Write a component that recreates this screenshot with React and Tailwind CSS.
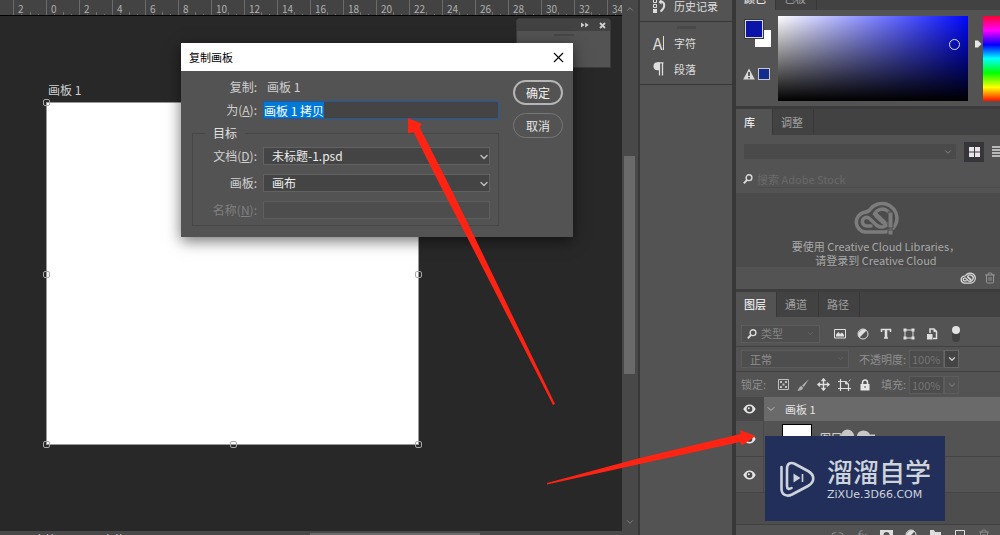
import React from 'react';
import { X, ChevronDown, ChevronUp, Move, Trash2, Link2 } from 'lucide-react';

const RULER_MARKS = ['2', '0', '2', '4', '6', '8', '10', '12', '14', '16', '18', '20', '22', '24', '26', '28', '30', '32', '34'];

const HANDLES = [
    'left-[-4px] top-[-4px]',
    'left-[-4px] top-1/2 -mt-[3px]',
    'right-[-4px] top-1/2 -mt-[3px]',
    'left-[-4px] bottom-[-4px]',
    'left-1/2 -ml-[3px] bottom-[-4px]',
    'right-[-4px] bottom-[-4px]',
];

const EyeIcon = () => (
    <svg width="13" height="10" viewBox="0 0 13 10">
        <path d="M0.3 5C2 1.8 4 .5 6.500 .5S11 1.800 12.700 5C11 8.200 9 9.500 6.500 9.500S2 8.200 .3 5Z" fill="#e6e6e6" />
        <circle cx="6.500" cy="5" r="2.900" fill="#484848" />
        <circle cx="5.800" cy="4.200" r="1" fill="#e6e6e6" />
    </svg>
);

const SearchIcon = () => (
    <svg width="10" height="10" viewBox="0 0 10 10" fill="none" stroke="#dcdcdc">
        <circle cx="6" cy="3.700" r="2.900" strokeWidth="1.400" />
        <path d="M4 6 .8 9.300" strokeWidth="1.800" />
    </svg>
);

const CloudIcon = ({ width, height, color }) => (
    <svg width={width} height={height} viewBox="0 0 46 33" fill="none" stroke={color} strokeLinecap="round">
        <path d="M12 31A10 10 0 0 1 10.500 11.500C14 11 15.500 11 17 8.500A15 15 0 0 1 44 16.500C44 25 38 31 31 31Z" strokeWidth="3.600" />
        <path d="M18 25H13.500A4.300 4.300 0 1 1 16.500 17.500L24 24.500C28 27.500 33 25.500 35.500 22.500" strokeWidth="3.600" />
        <path d="M21.500 13A8.600 8.600 0 0 1 37 20.500" strokeWidth="3.600" />
        <path d="M23.500 14.500 31 21.500" strokeWidth="5" />
    </svg>
);

const AdjustIcon = () => (
    <svg width="12" height="12" viewBox="0 0 12 12">
        <circle cx="6" cy="6" r="5" fill="none" stroke="#e0e0e0" />
        <path d="M9.500 2.500A5 5 0 0 0 2.500 9.500Z" fill="#e0e0e0" />
    </svg>
);

const Tab = ({ active, className, children }) => (
    <button
        type="button"
        role="tab"
        aria-selected={!!active}
        className={`border-r border-[#383838] px-2 text-left text-[11px] ${active ? 'bg-[#535353] font-medium text-[#e8e8e8]' : 'text-[#a3a3a3]'} ${className}`}
    >
        {children}
    </button>
);

const Ruler = () => (
    <div className="flex h-4 shrink-0 overflow-hidden border-b border-black bg-[#434343] pl-[13px]">
        {RULER_MARKS.map((mark, i) => (
            <div key={i} className="relative w-[33px] shrink-0 border-l border-[#6a6a6a] pl-1 pt-[3px] text-[10px] leading-3 text-[#b0b0b0]">
                {mark}
                <div className="absolute bottom-0 left-0 flex h-[3px] w-full justify-evenly">
                    <i className="h-px w-px self-end bg-[#707070]" />
                    <i className="h-[3px] w-px self-end bg-[#707070]" />
                    <i className="h-px w-px self-end bg-[#707070]" />
                </div>
            </div>
        ))}
    </div>
);

const Artboard = () => (
    <div className="absolute left-[46px] top-[86px]">
        <div className="absolute -top-5 left-[2px] whitespace-nowrap text-xs leading-4 text-[#cfcfcf]">画板 1</div>
        <div className="relative h-[343px] w-[373px] border border-[#9a9a9a] bg-white">
            {HANDLES.map((place) => (
                <span key={place} className={`absolute h-[7px] w-[7px] rounded-[2px] border border-[#a8a8a8] ${place}`} />
            ))}
        </div>
    </div>
);

const FloatingPanel = () => (
    <div className="absolute right-[11px] top-[2px] h-[50px] w-[95px] rounded-t border border-[#3a3a3a] bg-[#535353]">
        <div className="flex h-3 items-center justify-end gap-[10px] rounded-t bg-[#424242] pr-1">
            <svg width="8" height="6" viewBox="0 0 8 6" fill="#cfcfcf">
                <path d="M0 .5 3.500 3 0 5.500ZM4.200 .5 7.700 3 4.200 5.500Z" />
            </svg>
            <svg width="7" height="7" viewBox="0 0 7 7" stroke="#cfcfcf" strokeWidth="1.800">
                <path d="M1 1 6 6M6 1 1 6" />
            </svg>
        </div>
        <div className="mx-auto mt-[3px] h-[2px] w-5 bg-[#474747]" />
    </div>
);

const SelectField = ({ id, label, accessKey, value }) => (
    <div className="flex h-[18px] items-center">
        <label htmlFor={id} className="w-16 text-right text-[#d0d0d0]">
            {label}{accessKey && <>(<u>{accessKey}</u>)</>}:
        </label>
        <div className="relative ml-[6px] flex-1">
            <select id={id} className="block h-[18px] w-full appearance-none border border-[#626262] bg-[#444] pl-2 leading-4 text-[#ececec] outline-none">
                <option>{value}</option>
            </select>
            <ChevronDown size={12} strokeWidth={3} className="pointer-events-none absolute right-0 top-1 text-[#b8b8b8]" />
        </div>
    </div>
);

const DuplicateDialog = () => (
    <div role="dialog" aria-label="复制画板" className="absolute left-[181px] top-[43px] z-10 w-[392px] bg-[#535353] text-xs shadow-[0_4px_14px_rgba(0,0,0,0.55)]">
        <div className="flex h-7 items-center justify-between bg-white pl-2 pr-[6px] text-[11px] text-black">
            <span>复制画板</span>
            <button type="button" aria-label="关闭"><X size={17} strokeWidth={1.5} /></button>
        </div>
        <div className="flex pb-[11px] pl-[11px] pr-[10px] pt-[6px]">
            <div className="w-[307px]">
                <div className="flex h-5 items-center text-[#d0d0d0]">
                    <span className="w-[65px] text-right">复制:</span>
                    <span className="ml-[10px]">画板 1</span>
                </div>
                <div className="mt-1 flex h-[18px] items-center">
                    <label htmlFor="copy-name" className="w-[65px] text-right text-[#d0d0d0]">为(<u>A</u>):</label>
                    <input
                        id="copy-name"
                        autoFocus
                        onFocus={(e) => e.target.select()}
                        defaultValue="画板 1 拷贝"
                        className="ml-[6px] h-[18px] min-w-0 flex-1 border border-[#1f5aa5] bg-[#444] text-white outline-none selection:bg-[#0078d7] selection:text-white"
                    />
                </div>
                <fieldset className="mt-[6px] border border-[#464646] pb-[6px] pr-2">
                    <legend className="ml-3 px-2 leading-4 text-[#e0e0e0]">目标</legend>
                    <div className="flex flex-col gap-[9px] pt-[6px]">
                        <SelectField id="doc" label="文档" accessKey="D" value="未标题-1.psd" />
                        <SelectField id="board" label="画板" value="画布" />
                        <div className="flex h-[18px] items-center">
                            <label htmlFor="new-name" className="w-16 text-right text-[#808080]">名称(<u>N</u>):</label>
                            <input id="new-name" disabled className="ml-[6px] h-[18px] min-w-0 flex-1 border border-[#5e5e5e] bg-[#4d4d4d]" />
                        </div>
                    </div>
                </fieldset>
            </div>
            <div className="ml-auto flex w-[50px] flex-col gap-2 pt-[3px]">
                <button type="button" className="h-[25px] rounded-full border-2 border-[#b5b5b5] text-[#f0f0f0]">确定</button>
                <button type="button" className="h-[25px] rounded-full border border-[#777] text-[#e6e6e6]">取消</button>
            </div>
        </div>
    </div>
);

const Workspace = () => (
    <main className="flex min-w-0 flex-1 flex-col">
        <div className="flex min-h-0 flex-1">
            <div className="flex min-w-0 flex-1 flex-col">
                <Ruler />
                <div className="relative flex-1 bg-[#282828]">
                    <Artboard />
                    <FloatingPanel />
                </div>
            </div>
            <div className="flex w-4 flex-col items-center bg-[#484848] py-1">
                <ChevronUp size={10} className="shrink-0 text-[#8a8a8a]" />
                <div className="flex w-full flex-1 flex-col">
                    <div className="grow-[142]" />
                    <div className="ml-[2px] w-[11px] grow-[218] bg-[#6a6a6a]" />
                    <div className="grow-[143]" />
                </div>
                <ChevronDown size={10} className="shrink-0 text-[#8a8a8a]" />
            </div>
        </div>
        <div className="flex h-1 items-start overflow-hidden bg-[#484848] pl-[34px] text-[11px] leading-4 text-[#d0d0d0]">
            <span>文档:3.00M/0 字节</span>
            <div className="ml-auto mr-[158px] mt-[2px] h-1 w-[170px] bg-[#6a6a6a]" />
        </div>
    </main>
);

const DockItem = ({ icon, children }) => (
    <button type="button" className="flex h-[26px] w-full items-center gap-2 pl-[11px] text-[11px] text-[#dedede]">
        <span className="flex w-[15px] justify-center">{icon}</span>
        {children}
    </button>
);

const Dock = () => (
    <nav className="flex w-24 shrink-0 flex-col border-x-2 border-[#383838] bg-[#535353]">
        <div className="flex h-[22px] items-end overflow-hidden border-b border-[#383838] pb-[2px]">
            <DockItem
                icon={
                    <svg width="14" height="14" viewBox="0 0 14 14" fill="none" stroke="#dedede">
                        <path d="M1.500 .5h3v3h-3zM1.500 5.500h3v3h-3z" />
                        <path d="M1 10h4v4H1z" fill="#dedede" stroke="none" />
                        <path d="M8 2.500C13 2 14 8 8.500 12.500" strokeWidth="2" />
                        <path d="M6.500 3 9.500 .2V5.800Z" fill="#dedede" stroke="none" />
                    </svg>
                }
            >
                历史记录
            </DockItem>
        </div>
        <div className="border-b border-[#383838] pb-[2px]">
            <div className="mx-auto mb-px mt-1 h-[3px] w-[19px] bg-[#494949]" />
            <DockItem
                icon={
                    <span className="flex items-center gap-px text-base leading-4">
                        A<i className="h-[14px] w-px bg-[#dedede]" />
                    </span>
                }
            >
                字符
            </DockItem>
            <DockItem
                icon={
                    <svg width="11" height="14" viewBox="0 0 11 14">
                        <path d="M10.500 .8H4.500M6.500 .8V13.500M9.500 .8V13.500" fill="none" stroke="#dedede" strokeWidth="1.300" />
                        <path d="M6.500 .2H4.500a3.900 3.900 0 0 0 0 8H6.500Z" fill="#dedede" />
                    </svg>
                }
            >
                段落
            </DockItem>
        </div>
    </nav>
);

const ColorPanel = () => (
    <section className="border-b-3 border-[#3c3c3c]">
        <div role="tablist" className="flex h-[10px] items-end overflow-hidden bg-[#424242]">
            <Tab active className="h-6 w-10 shrink-0 leading-4">颜色</Tab>
            <Tab className="h-6 w-[41px] shrink-0 leading-4">色板</Tab>
        </div>
        <div className="flex h-24 pt-[6px]">
            <div className="relative w-[42px] shrink-0">
                <button type="button" aria-label="背景色" className="absolute left-[19px] top-[14px] h-[17px] w-4 bg-white" />
                <button type="button" aria-label="前景色" className="absolute left-[9px] top-1 h-[18px] w-[18px] border border-[#d8d8d8] bg-[#0b14a8] outline-1 outline-[#3a3a3a]" />
                <div className="absolute left-[7px] top-[52px] flex items-center gap-[3px]">
                    <svg width="12" height="12" viewBox="0 0 12 12">
                        <path d="M6 .5 11.800 11.500H.2Z" fill="#d8d8d8" />
                        <path d="M6 4V8M6 9V10.500" stroke="#333" strokeWidth="1.500" />
                    </svg>
                    <button type="button" aria-label="可打印颜色" className="h-3 w-3 border border-[#c8c8c8] bg-[#122b8c]" />
                </div>
            </div>
            <div className="relative h-[85px] w-[190px] shrink-0 bg-[linear-gradient(to_right,#ffffff,#0008ff)]">
                <div className="h-full bg-[linear-gradient(to_bottom,rgba(0,0,0,0),#000000)]" />
                <span className="absolute right-2 top-[23px] h-[11px] w-[11px] rounded-full border border-[#dcdcff]" />
            </div>
            <svg width="15" height="85" viewBox="0 0 15 85" className="shrink-0">
                <path d="M7 24.500H10L13.500 28 10 31.500H7Z" fill="#e6e6e6" />
            </svg>
            <div className="h-[85px] flex-1 bg-[linear-gradient(to_bottom,#ff0030,#ff00ff_17%,#0000ff_34%,#00ffff_50%,#00ff00_67%,#ffff00_84%,#ff1000)]" />
        </div>
    </section>
);

const LibraryPanel = () => (
    <section className="border-b-3 border-[#3c3c3c]">
        <div role="tablist" className="flex h-[26px] bg-[#424242]">
            <Tab active className="w-[37px]">库</Tab>
            <Tab className="w-[41px]">调整</Tab>
        </div>
        <div className="flex h-[33px] items-center pl-2">
            <div className="relative w-[212px]">
                <select aria-label="资源库" className="block h-[15px] w-full appearance-none bg-[#4a4a4a] outline-none" />
                <ChevronDown size={10} className="pointer-events-none absolute right-[3px] top-[3px] text-[#8a8a8a]" />
            </div>
            <button type="button" aria-label="网格视图" className="ml-2 flex h-5 w-5 items-center justify-center bg-[#35353a]">
                <svg width="11" height="10" viewBox="0 0 11 10" fill="#e8e4e8">
                    <path d="M0 0h5v4.500H0zM6 0h5v4.500H6zM0 5.500h5V10H0zM6 5.500h5V10H6z" />
                </svg>
            </button>
            <button type="button" aria-label="列表视图" className="ml-2 flex-1 overflow-hidden">
                <svg width="11" height="11" viewBox="0 0 11 11" stroke="#dcdcdc" strokeWidth="1.500">
                    <path d="M0 1H11M0 4H11M0 7H11M0 10H11" />
                </svg>
            </button>
        </div>
        <div className="mb-[3px] flex h-[22px] items-center gap-1 pl-[7px]">
            <SearchIcon />
            <input aria-label="搜索 Adobe Stock" placeholder="搜索 Adobe Stock" className="min-w-0 flex-1 border-b border-[#4c4c4c] text-[11px] leading-4 outline-none placeholder:text-[#696969]" />
        </div>
        <div className="flex h-[74px] flex-col items-center overflow-hidden bg-[#4b4b4b] pl-4 pt-2 text-[11px] leading-[14px] text-[#a8a8a8]">
            <div className="relative">
                <CloudIcon width={46} height={33} color="#7c7c7c" />
                <svg width="9" height="25" viewBox="0 0 9 25" className="absolute right-1 top-[10px]">
                    <path d="M2 1H7V17H2ZM2 19H7V24H2Z" fill="#7c7c7c" stroke="#4b4b4b" />
                </svg>
            </div>
            <p className="mt-[5px] whitespace-nowrap">要使用 Creative Cloud Libraries，</p>
            <p className="whitespace-nowrap">请登录到 Creative Cloud</p>
        </div>
        <div className="flex h-[22px] items-center justify-end gap-2 pr-1">
            <button type="button" aria-label="Creative Cloud"><CloudIcon width={16} height={12} color="#dcdcdc" /></button>
            <button type="button" aria-label="删除"><Trash2 size={12} className="text-[#949494]" /></button>
        </div>
    </section>
);

const PercentField = ({ id, label, open }) => (
    <div className="flex items-center">
        <label htmlFor={id} className="text-[#8e8e8e]">{label}:</label>
        <input id={id} defaultValue="100%" className="ml-[3px] h-[18px] w-[35px] border border-[#5c5c5c] bg-[#4c4c4c] px-[2px] text-[#747474] outline-none" />
        <button type="button" aria-label={`${label}选项`} className={`flex h-[18px] w-[15px] items-center justify-center border ${open ? 'border-[#666] bg-[#444] text-[#d0d0d0]' : 'border-[#5c5c5c] text-[#707070]'}`}>
            <ChevronDown size={10} strokeWidth={3} />
        </button>
    </div>
);

const LayerFilters = () => (
    <div className="text-[11px]">
        <div className="flex h-[30px] items-center border-b border-[#404040] pl-[5px] pt-1">
            <div className="flex h-[18px] w-[79px] items-center gap-1 border border-[#5c5c5c] bg-[#4e4e4e] pl-[5px] pr-1 text-[#858585]">
                <SearchIcon />
                <select aria-label="筛选类型" className="min-w-0 flex-1 appearance-none outline-none"><option>类型</option></select>
                <ChevronDown size={9} className="text-[#6a6a6a]" />
            </div>
            <div className="ml-[14px] flex items-center gap-[11px] text-[#e0e0e0]">
                <button type="button" aria-label="像素图层">
                    <svg width="12" height="11" viewBox="0 0 12 11">
                        <path d="M.5 1.500h11v8.500H.5z" fill="none" stroke="#e0e0e0" />
                        <path d="M2 8.500V6.500L4.500 4 6 6 8 4.500 10 7V8.500Z" fill="#e0e0e0" />
                    </svg>
                </button>
                <button type="button" aria-label="调整图层"><AdjustIcon /></button>
                <button type="button" aria-label="文字图层">
                    <svg width="12" height="11" viewBox="0 0 12 11" fill="none" stroke="#e0e0e0">
                        <path d="M1.500 4V1.500H10.500V4M4 10H8" strokeWidth="1.500" />
                        <path d="M6 1.500V10" strokeWidth="2.500" />
                    </svg>
                </button>
                <button type="button" aria-label="形状图层">
                    <svg width="12" height="12" viewBox="0 0 12 12">
                        <path d="M2 2H10V10H2Z" fill="none" stroke="#e0e0e0" />
                        <path d="M.5 .5h3v3h-3zM8.500 .5h3v3h-3zM.5 8.500h3v3h-3zM8.500 8.500h3v3h-3z" fill="#e0e0e0" />
                    </svg>
                </button>
                <button type="button" aria-label="智能对象">
                    <svg width="12" height="12" viewBox="0 0 12 12">
                        <path d="M4 5V1H8L10.500 3.500V10.500H7" fill="none" stroke="#e0e0e0" strokeWidth="1.500" />
                        <path d="M1 6h5.500v5.500H1zM7.500 1v3h3z" fill="#e0e0e0" />
                    </svg>
                </button>
            </div>
            <button type="button" aria-label="图层过滤开关" aria-pressed="true" className="ml-[14px] h-4 w-2 rounded-full bg-[#404040]">
                <span className="-mt-2 block h-2 w-2 rounded-full bg-[#e2e2e2]" />
            </button>
        </div>
        <div className="flex h-[25px] items-center justify-between border-b border-[#404040] pl-[5px] pr-[41px]">
            <div className="relative w-[108px]">
                <select aria-label="混合模式" className="block h-[18px] w-full appearance-none border border-[#5c5c5c] bg-[#4e4e4e] pl-2 text-[#8e8e8e] outline-none">
                    <option>正常</option>
                </select>
                <ChevronDown size={9} className="pointer-events-none absolute right-1 top-1 text-[#686868]" />
            </div>
            <PercentField id="opacity" label="不透明度" open />
        </div>
        <div className="flex h-[25px] items-center justify-between pl-[5px] pr-[41px]">
            <span className="text-[#8e8e8e]">锁定:</span>
            <div className="flex w-[92px] items-center justify-between text-[#e0e0e0]">
                <svg width="11" height="11" viewBox="0 0 11 11">
                    <path d="M.5 .5h10v10H.5z" fill="none" stroke="#c0c0c0" />
                    <path d="M2 2h2v2H2zM7 2h2v2H7zM4.500 4.500h2v2h-2zM2 7h2v2H2zM7 7h2v2H7z" fill="#c0c0c0" />
                </svg>
                <svg width="12" height="12" viewBox="0 0 12 12" fill="#b0b0b0">
                    <path d="M11.800 .2 6.800 8 5 6.400ZM4.400 7 6.200 8.700C5.500 11 3 12 .2 11.600 2 10.500 1.800 7.500 4.400 7Z" />
                </svg>
                <Move size={13} strokeWidth={2.5} />
                <svg width="13" height="12" viewBox="0 0 13 12" fill="none" stroke="#e0e0e0">
                    <path d="M0 2.500H8.500M2.500 0V12M0 9.500H13M10.500 5V12" strokeWidth="1.200" />
                    <path d="M7.500 2 10.500 5H7.500ZM10.500 2.500 12.500 .5" fill="#e0e0e0" strokeWidth=".8" />
                </svg>
                <svg width="10" height="12" viewBox="0 0 10 12">
                    <path d="M2.500 6V3.500a2.500 2.500 0 0 1 5 0V6" fill="none" stroke="#e6e6e6" strokeWidth="1.500" />
                    <path d="M.5 5h9v6.500h-9zM4.500 7v2h1V7Z" fill="#e6e6e6" fillRule="evenodd" />
                </svg>
            </div>
            <PercentField id="fill" label="填充" />
        </div>
    </div>
);

const VisibilityCell = () => (
    <button type="button" aria-label="切换可见性" className="flex w-7 shrink-0 items-center justify-center border-r border-[#484848]">
        <EyeIcon />
    </button>
);

const LayersPanel = () => (
    <section className="flex min-h-0 flex-1 flex-col">
        <div role="tablist" className="flex h-[25px] shrink-0 bg-[#424242]">
            <Tab active className="w-[41px]">图层</Tab>
            <Tab className="w-[42px]">通道</Tab>
            <Tab className="w-[41px]">路径</Tab>
        </div>
        <LayerFilters />
        <div className="flex-1 overflow-hidden bg-[#4d4d4d] text-[11px] text-[#e4e4e4]">
            <div className="flex h-6 bg-[#484848]">
                <VisibilityCell />
                <div className="flex flex-1 items-center gap-2 bg-[#6a6a6a] pl-px">
                    <ChevronDown size={12} className="text-[#c0c0c0]" />
                    画板 1
                </div>
            </div>
            <div className="flex h-9 border-b border-[#444] bg-[#535353]">
                <VisibilityCell />
                <div className="flex items-center gap-2 pl-[18px]">
                    <span className="h-[30px] w-[30px] border border-black bg-white" />
                    图层 1
                </div>
            </div>
            <div className="flex h-9 border-b border-[#444] bg-[#535353]">
                <VisibilityCell />
            </div>
        </div>
        <div className="flex h-[11px] shrink-0 items-start justify-end gap-3 overflow-hidden border-t border-[#404040] pr-[10px] pt-1 text-[#d8d8d8]">
            <Link2 size={13} className="text-[#888]" />
            <i className="w-3 text-xs leading-3 text-[#888]">fx</i>
            <svg width="13" height="12" viewBox="0 0 13 12">
                <path d="M0 1H13V12H0ZM6.500 3A3 3 0 0 0 6.500 9 3 3 0 0 0 6.500 3Z" fill="#dedede" fillRule="evenodd" />
            </svg>
            <AdjustIcon />
            <svg width="13" height="12" viewBox="0 0 13 12"><path d="M1 1H5L6 3H12V11H1Z" fill="#dedede" /></svg>
            <svg width="12" height="12" viewBox="0 0 12 12"><path d="M1.500 1.500h9v9h-9z" fill="none" stroke="#dedede" /></svg>
            <Trash2 size={12} className="text-[#888]" />
        </div>
    </section>
);

const Watermark = () => (
    <div className="absolute bottom-[14px] right-[55px] z-20 flex h-[85px] w-[180px] items-center gap-3 bg-[#212f5a] pl-[15px] text-[#cfd3dc]">
        <svg width="110" height="7" viewBox="0 0 110 7" className="absolute -top-[7px] left-0" fill="#c8c8c8">
            <path d="M76 7A6.500 6.500 0 0 1 89 7ZM92 7A6.500 5.500 0 0 1 105 7Z" />
            <path d="M100 5.500H112V7H100Z" />
        </svg>
        <svg width="35" height="36" viewBox="0 0 35 36" fill="none" stroke="#cfd3dc" strokeWidth="2.600" strokeLinecap="round" className="shrink-0">
            <path d="M1.500 6V28C1.500 34 7 36 12 33.500L28 25C35 21 35 14 28 10L15 3C10 .5 7 3 7 8V25C7 28 9 28.500 11.500 27" />
            <path d="M13.500 12.500V21.500L20.500 17Z" fill="#cfd3dc" stroke="none" />
            <path d="M22.500 13V21" strokeWidth="1.600" strokeLinecap="butt" />
        </svg>
        <div className="whitespace-nowrap">
            <div className="text-[26px] font-medium leading-7">溜溜自学</div>
            <div className="mt-1 font-['DejaVu_Sans',sans-serif] text-[11px] leading-3">ZiXUe.3D66.COM</div>
        </div>
    </div>
);

const Arrows = () => (
    <svg width="360" height="380" viewBox="400 110 360 380" className="pointer-events-none absolute left-[400px] top-[110px] z-30" fill="#ff2314">
        <path d="M408 118 422 124 419.500 127 449 185 475 238 555 404 553 405 466 235 440 185 413.500 132 408 133.500Z" />
        <path d="M755.500 436 740 430 740.500 434 640 458 547 483 547 484.500 640 464 740 442 742 445.500Z" />
    </svg>
);

const App = () => (
    <div className="relative flex h-screen overflow-hidden bg-[#484848] font-['Noto_Sans_CJK_SC',sans-serif]">
        <Workspace />
        <Dock />
        <aside className="flex w-[266px] shrink-0 flex-col border-l-2 border-[#383838] bg-[#535353]">
            <ColorPanel />
            <LibraryPanel />
            <LayersPanel />
        </aside>
        <DuplicateDialog />
        <Watermark />
        <Arrows />
    </div>
);

export default App;
